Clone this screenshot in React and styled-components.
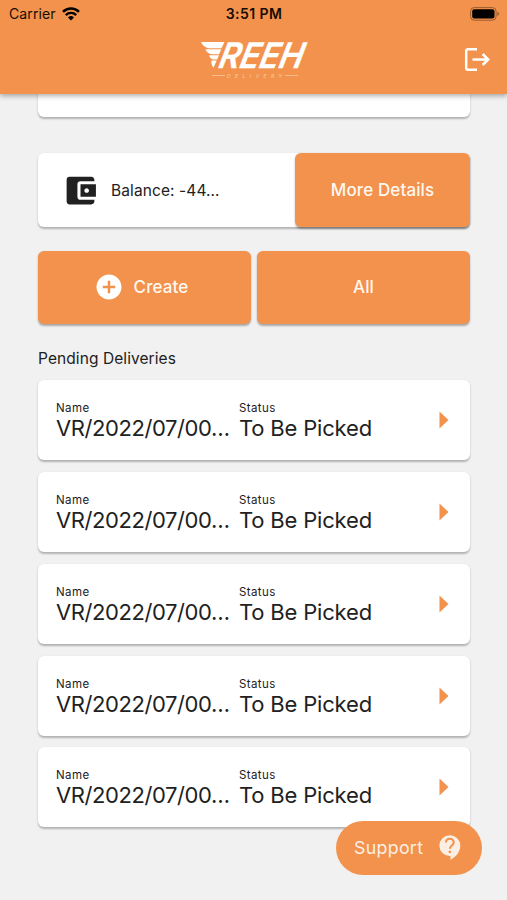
import React from 'react';
import styled, { createGlobalStyle } from 'styled-components';
import { MdAccountBalanceWallet, MdAddCircle } from 'react-icons/md';

const orange = '#f2924c';
const background = '#f1f1f1';
const ink = '#212121';

const GlobalStyle = createGlobalStyle`
  * {
    box-sizing: border-box;
  }
  body {
    margin: 0;
    background: ${background};
    color: ${ink};
    font-family: Inter, 'Liberation Sans', sans-serif;
  }
`;

const Screen = styled.div`
  height: 900px;
  overflow: hidden;
  position: relative;
  display: flex;
  flex-direction: column;
`;
const Header = styled.header`
  height: 94px;
  flex: none;
  z-index: 1;
  background: ${orange};
  box-shadow: 0 2px 5px rgba(0, 0, 0, 0.32);
`;
const StatusBar = styled.div`
  height: 27px;
  display: grid;
  grid-template-columns: 1fr auto 1fr;
  align-items: center;
  padding: 0 7px 0 9px;
  color: #160c05;
`;
const Carrier = styled.div`
  display: flex;
  align-items: center;
  gap: 6px;
  font-size: 14px;
  letter-spacing: 0.1px;
`;
const Clock = styled.div`
  margin-right: 1px;
  font-size: 14px;
  font-weight: 600;
  letter-spacing: 0.45px;
`;
const BatterySlot = styled.div`
  display: flex;
  justify-content: flex-end;
`;
const TitleBar = styled.div`
  height: 67px;
  display: grid;
  grid-template-columns: 1fr auto 1fr;
  align-items: center;
  padding: 0 16px;
`;
const LogoutButton = styled.button`
  grid-column: 3;
  justify-self: end;
  display: flex;
  padding: 0;
  border: 0;
  background: none;
  margin-top: -3px;
`;
const LogoSlot = styled.div`
  grid-column: 2;
  display: flex;
  padding: 0 0 4px 12px;
`;
const Content = styled.main`
  display: flex;
  flex-direction: column;
  padding: 0 37px 0 38px;
`;
const Card = styled.div`
  background: #fff;
  border-radius: 6px;
  box-shadow: 0 1.5px 2px rgba(0, 0, 0, 0.26);
`;
const ScrolledCard = styled(Card)`
  height: 43px;
  margin-top: -20px;
`;
const BalanceCard = styled(Card)`
  display: flex;
  height: 73.5px;
  margin-top: 36.4px;
`;
const Balance = styled.div`
  flex: 1;
  display: flex;
  align-items: center;
  gap: 12px;
  padding-left: 24px;
  font-size: 15.5px;
  letter-spacing: 0.1px;
`;
const Button = styled.button`
  display: flex;
  align-items: center;
  justify-content: center;
  gap: 10px;
  width: ${(props) => props.$width};
  height: 73.5px;
  padding: 0 ${(props) => props.$endPadding || '0'} 1px 0;
  border: 0;
  border-radius: 6px;
  background: ${orange};
  box-shadow: 0 1.5px 2px rgba(0, 0, 0, 0.3);
  color: #fff8f1;
  font-family: inherit;
  font-size: 17px;
  font-weight: 500;
  letter-spacing: 0.12px;
`;
const Actions = styled.div`
  display: grid;
  grid-template-columns: 1fr 1fr;
  gap: 6px;
  margin-top: 24px;
`;
const SectionTitle = styled.h2`
  margin: 23.4px 0 11.7px;
  font-size: 15.5px;
  font-weight: 400;
  line-height: 21px;
  letter-spacing: 0.08px;
`;
const List = styled.div`
  display: flex;
  flex-direction: column;
  gap: 11.7px;
`;
const Delivery = styled(Card)`
  height: 80px;
  display: grid;
  grid-template-columns: 183px 1fr auto;
  align-items: center;
  padding: 0 21px 0 18px;
`;
const Label = styled.div`
  font-size: 11.5px;
  line-height: 16px;
  letter-spacing: 0.4px;
`;
const Value = styled.div`
  font-size: 22px;
  line-height: 24px;
  white-space: nowrap;
  letter-spacing: ${(props) => props.$spacing || '0'};
`;
const Arrow = styled.svg`
  display: block;
`;
const SupportButton = styled.button`
  position: absolute;
  right: 25px;
  bottom: 25px;
  display: flex;
  align-items: center;
  justify-content: space-between;
  width: 146px;
  height: 54.5px;
  padding: 0 21px 0 18px;
  border: 0;
  border-radius: 28px;
  background: ${orange};
  color: #fbefe5;
  font-family: inherit;
  font-size: 17.8px;
  letter-spacing: 0.3px;
`;

const WifiIcon = () => (
  <svg width="18" height="14" viewBox="0 0 18 14" fill="none" stroke="#000">
    <path d="M1 4.9a11.4 11.4 0 0 1 16 0" strokeWidth="2.5" />
    <path d="M3.8 8.1a7.4 7.4 0 0 1 10.4 0" strokeWidth="2.3" />
    <path d="M6 10.4a4.3 4.3 0 0 1 6 0L9 13.6z" fill="#000" stroke="none" />
  </svg>
);

const BatteryIcon = () => (
  <svg width="30" height="14" viewBox="0 0 30 14">
    <rect x="0.6" y="0.6" width="25.5" height="12.6" rx="3.6" fill="none" stroke="#9b5c2f" />
    <rect x="2.2" y="2.2" width="22.3" height="9.4" rx="2" fill="#000" />
    <path d="M27.3 4.8c2.4.8 2.4 3.4 0 4.2z" fill="#9b5c2f" />
  </svg>
);

const Logo = () => (
  <svg width="118" height="56" viewBox="0 -8 118 56" fill="#fff">
    <path d="M0 3h23.5l-3 6.2H7.5C4.5 8.8 1.5 6.5 0 3z" />
    <path d="M4.3 10.2h16l-2.2 5H11c-3-.2-5.5-1.9-6.700-5z" />
    <path d="M8 16.2h10l-1.900 4.400h-3.100c-2.400-.2-4.100-1.700-5-4.400z" />
    <path d="M10.5 21.600h5.200L12.600 28.500c-1.900-1.500-2.400-3.800-2.100-6.900z" />
    <text
      transform="translate(15 29) skewX(-21)"
      fontSize="35"
      fontWeight="600"
      stroke="#fff"
      strokeWidth="0.4"
      textLength="84"
      lengthAdjust="spacingAndGlyphs"
    >
      REEH
    </text>
    <g opacity="0.5">
      <path d="M11 36.300h13v.8H11zM84 36.300h13v.8H84z" />
      <text x="26" y="38.600" fontSize="5" fontStyle="italic" textLength="55">
        DELIVERY
      </text>
    </g>
  </svg>
);

const LogoutIcon = () => (
  <svg width="27" height="25" viewBox="0 0 27 25" fill="none" stroke="#fff" strokeWidth="2.5">
    <path d="M13 2.2H4q-1.8 0-1.8 1.8v17q0 1.8 1.8 1.8h9" />
    <path d="M8.5 12.5h15.5M18.700 7l5.5 5.5-5.5 5.5" />
  </svg>
);

const SupportIcon = () => (
  <svg width="22" height="25" viewBox="0 0 22 25" fill="none">
    <path
      d="M10.8 0.3a10.4 10.4 0 1 0 0 20.8h.7v3.6c6-2.9 9.8-8.6 9.8-14A10.4 10.4 0 0 0 10.8.3z"
      fill="currentColor"
    />
    <path
      d="M6.900 7.5a3.900 3.700 0 1 1 7.800 0c0 3-3.800 3.100-3.800 6.300"
      stroke={orange}
      strokeWidth="2.1"
    />
    <path d="M9.700 15.700H12v2.300H9.700z" fill={orange} />
  </svg>
);

const deliveries = [1, 2, 3, 4, 5].map((id) => ({
  id,
  name: 'VR/2022/07/00…',
  status: 'To Be Picked',
}));

const App = () => {
  return (
    <Screen>
      <GlobalStyle />
      <Header>
        <StatusBar>
          <Carrier>
            Carrier <WifiIcon />
          </Carrier>
          <Clock>3:51 PM</Clock>
          <BatterySlot>
            <BatteryIcon />
          </BatterySlot>
        </StatusBar>
        <TitleBar>
          <LogoSlot>
            <Logo />
          </LogoSlot>
          <LogoutButton>
            <LogoutIcon />
          </LogoutButton>
        </TitleBar>
      </Header>
      <Content>
        <ScrolledCard />
        <BalanceCard>
          <Balance>
            <MdAccountBalanceWallet size={37} />
            Balance: -44…
          </Balance>
          <Button $width="175px">More Details</Button>
        </BalanceCard>
        <Actions>
          <Button $endPadding="7px">
            <MdAddCircle size={30} color="#fff" />
            Create
          </Button>
          <Button>All</Button>
        </Actions>
        <SectionTitle>Pending Deliveries</SectionTitle>
        <List>
          {deliveries.map((delivery) => (
            <Delivery key={delivery.id}>
              <div>
                <Label>Name</Label>
                <Value $spacing="-0.42px">{delivery.name}</Value>
              </div>
              <div>
                <Label>Status</Label>
                <Value $spacing="-0.18px">{delivery.status}</Value>
              </div>
              <Arrow width="10" height="18" viewBox="0 0 10 18">
                <path d="M0.5 0.5L9.5 9L0.5 17.5z" fill={orange} />
              </Arrow>
            </Delivery>
          ))}
        </List>
      </Content>
      <SupportButton>
        Support
        <SupportIcon />
      </SupportButton>
    </Screen>
  );
};

export default App;
